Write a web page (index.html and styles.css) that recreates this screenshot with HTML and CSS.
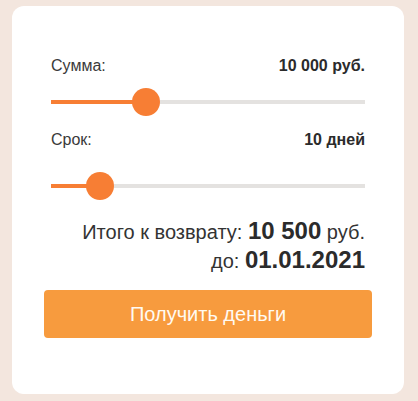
FILE: index.html
```html
<!DOCTYPE html>
<html lang="ru">
<head>
<meta charset="utf-8">
<title>Калькулятор займа</title>
<link rel="stylesheet" href="styles.css">
</head>
<body>
<div class="stack">
  <section class="card">
    <div class="fields">
      <div class="row">
        <span class="label">Сумма:</span>
        <span class="value">10 000 руб.</span>
      </div>
      <div class="slider slider-sum">
        <div class="track"><div class="fill" style="width:30.25%"></div></div>
        <div class="thumb" style="left:30.25%"></div>
      </div>

      <div class="row row-term">
        <span class="label">Срок:</span>
        <span class="value">10 дней</span>
      </div>
      <div class="slider slider-term">
        <div class="track"><div class="fill" style="width:15.6%"></div></div>
        <div class="thumb" style="left:15.6%"></div>
      </div>

      <div class="total">
        <div>Итого к возврату: <b>10 500</b> руб.</div>
        <div>до: <b>01.01.2021</b></div>
      </div>
    </div>
    <button class="cta" type="button">Получить деньги</button>
  </section>
</div>
</body>
</html>
```
FILE: styles.css
```css
html, body {
  margin: 0;
  background: #f3e6de;
}

body {
  padding: 6px 14px 0 12px;
  font-family: "Liberation Sans", Arial, sans-serif;
  color: #333;
}

.stack {
  position: relative;
  width: 392px;
}

/* second card peeking out from underneath */
.stack::before {
  content: "";
  position: absolute;
  left: 10px;
  right: 10px;
  top: 20px;
  bottom: -12px;
  background: #f8efea;
  border-radius: 12px;
}

.card {
  position: relative;
  background: #fff;
  border-radius: 12px;
  padding: 50px 32px 56px;
}

.fields {
  padding: 0 7px;
}

.row {
  display: flex;
  justify-content: space-between;
  align-items: baseline;
  font-size: 16px;
  line-height: 20px;
}

.label {
  color: #3a3a3a;
}

.value {
  font-weight: 700;
  color: #2b2b2b;
}

.row-term {
  margin-top: 14px;
}

.slider {
  position: relative;
  height: 28px;
}

.slider-sum {
  margin-top: 12px;
}

.slider-term {
  margin-top: 22px;
}

.track {
  position: absolute;
  left: 0;
  right: 0;
  top: 12px;
  height: 4px;
  background: #e4e2e0;
}

.fill {
  height: 100%;
  background: #f77e34;
}

.thumb {
  position: absolute;
  top: 0;
  width: 28px;
  height: 28px;
  margin-left: -14px;
  border-radius: 50%;
  background: #f77e34;
}

.total {
  margin-top: 17px;
  text-align: right;
  font-size: 20px;
  line-height: 28px;
  color: #333;
}

.total b {
  font-size: 24px;
  font-weight: 700;
  color: #2b2b2b;
}

.cta {
  display: block;
  width: 100%;
  height: 48px;
  margin-top: 15px;
  border: 0;
  border-radius: 4px;
  background: #f79b3e;
  color: #fffaf2;
  font-family: inherit;
  font-size: 20px;
  cursor: pointer;
}
```
